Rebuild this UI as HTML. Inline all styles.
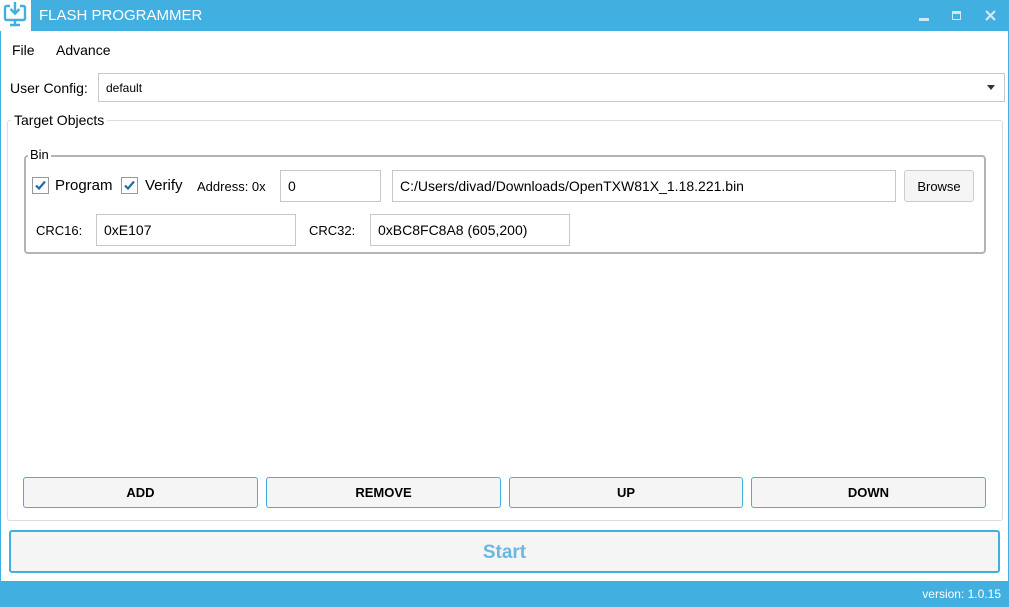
<!DOCTYPE html>
<html><head><meta charset="utf-8"><style>
*{box-sizing:border-box;margin:0;padding:0}
body{width:1009px;height:607px;position:relative;background:#fff;font-family:"Liberation Sans",sans-serif;overflow:hidden;color:#000}
.a{position:absolute}
.inp{position:absolute;border:1px solid #c8c8c8;background:#fff;font-size:14px;padding-left:7px;display:flex;align-items:center}
.btn{position:absolute;border:1px solid #41b0e0;border-radius:3px;background:#f5f5f5;font-weight:bold;font-size:13px;display:flex;align-items:center;justify-content:center;top:477px;height:31px}
.cb{position:absolute;width:17px;height:17px;border:1px solid #999;background:#fff}
.cb svg{position:absolute;left:1px;top:1px}
</style></head><body>
<div class="a" style="left:0;top:0;width:1009px;height:31px;background:#41b0e0"></div>
<div class="a" style="left:0;top:0;width:1px;height:607px;background:#41b0e0"></div>
<div class="a" style="right:0;top:0;width:1px;height:607px;background:#41b0e0"></div>
<div class="a" style="left:0;top:0;width:31px;height:31px;background:#fff">
<svg width="31" height="31" viewBox="0 0 31 31"><g fill="none" stroke="#41b0e0" stroke-width="2.4"><path d="M10 6H6.5a1.5 1.5 0 0 0-1.5 1.5v11a1.5 1.5 0 0 0 1.5 1.5h17a1.5 1.5 0 0 0 1.5-1.5v-11A1.5 1.5 0 0 0 23.5 6H20"/><path d="M15 2v11M10.5 9l4.5 4.5 4.5-4.5"/><path d="M15 20v4M10 25h10"/></g></svg></div>
<div class="a" style="left:39px;top:7px;color:#fff;font-size:15px">FLASH PROGRAMMER</div>
<div class="a" style="left:919px;top:18px;width:10px;height:3px;background:#cfe9f7"></div>
<div class="a" style="left:952px;top:11px;width:9px;height:9px;border:1px solid #cfe9f7;border-top-width:3px"></div>
<svg class="a" style="left:985px;top:10px" width="11" height="11"><path d="M1 1l9 9M10 1l-9 9" stroke="#cfe9f7" stroke-width="2.2"/></svg>
<div class="a" style="left:12px;top:42px;font-size:14px">File</div>
<div class="a" style="left:56px;top:42px;font-size:14px">Advance</div>
<div class="a" style="left:10px;top:80px;font-size:14px">User Config:</div>
<div class="inp" style="left:98px;top:73px;width:907px;height:29px;font-size:12px">default</div>
<div class="a" style="left:987px;top:85px;width:0;height:0;border-left:4px solid transparent;border-right:4px solid transparent;border-top:5px solid #333"></div>
<div class="a" style="left:7px;top:120px;width:996px;height:401px;border:1px solid #d5dfe5;border-radius:3px"></div>
<div class="a" style="left:11px;top:112px;background:#fff;padding:0 3px;font-size:14px">Target Objects</div>
<div class="a" style="left:24px;top:155px;width:962px;height:99px;border:2px solid #b4b4b4;border-radius:4px"></div>
<div class="a" style="left:28px;top:147px;background:#fff;padding:0 2px;font-size:13px">Bin</div>
<div class="cb" style="left:32px;top:177px"><svg width="13" height="13"><path d="M2 6.5l3 3 6-7" stroke="#1d6fa5" stroke-width="2.2" fill="none"/></svg></div>
<div class="a" style="left:55px;top:177px;font-size:15px">Program</div>
<div class="cb" style="left:121px;top:177px"><svg width="13" height="13"><path d="M2 6.5l3 3 6-7" stroke="#1d6fa5" stroke-width="2.2" fill="none"/></svg></div>
<div class="a" style="left:145px;top:177px;font-size:15px">Verify</div>
<div class="a" style="left:197px;top:179px;font-size:13px">Address: 0x</div>
<div class="inp" style="left:280px;top:170px;width:101px;height:32px">0</div>
<div class="inp" style="left:392px;top:170px;width:504px;height:32px">C:/Users/divad/Downloads/OpenTXW81X_1.18.221.bin</div>
<div class="a" style="left:904px;top:170px;width:70px;height:32px;border:1px solid #ccc;border-radius:3px;background:#f5f5f5;font-size:13px;display:flex;align-items:center;justify-content:center">Browse</div>
<div class="a" style="left:36px;top:223px;font-size:13px">CRC16:</div>
<div class="inp" style="left:96px;top:214px;width:200px;height:32px">0xE107</div>
<div class="a" style="left:309px;top:223px;font-size:13px">CRC32:</div>
<div class="inp" style="left:370px;top:214px;width:200px;height:32px">0xBC8FC8A8 (605,200)</div>
<div class="btn" style="left:23px;width:235px">ADD</div>
<div class="btn" style="left:266px;width:235px">REMOVE</div>
<div class="btn" style="left:509px;width:234px">UP</div>
<div class="btn" style="left:751px;width:235px">DOWN</div>
<div class="a" style="left:9px;top:530px;width:991px;height:43px;border:2px solid #41b0e0;border-radius:3px;background:#f5f5f5;color:#6ab8e0;font-weight:bold;font-size:19px;display:flex;align-items:center;justify-content:center;padding-top:3px">Start</div>
<div class="a" style="left:0;top:581px;width:1009px;height:26px;background:#41b0e0"></div>
<div class="a" style="right:8px;top:587px;color:#fff;font-size:12px">version: 1.0.15</div>
</body></html>
